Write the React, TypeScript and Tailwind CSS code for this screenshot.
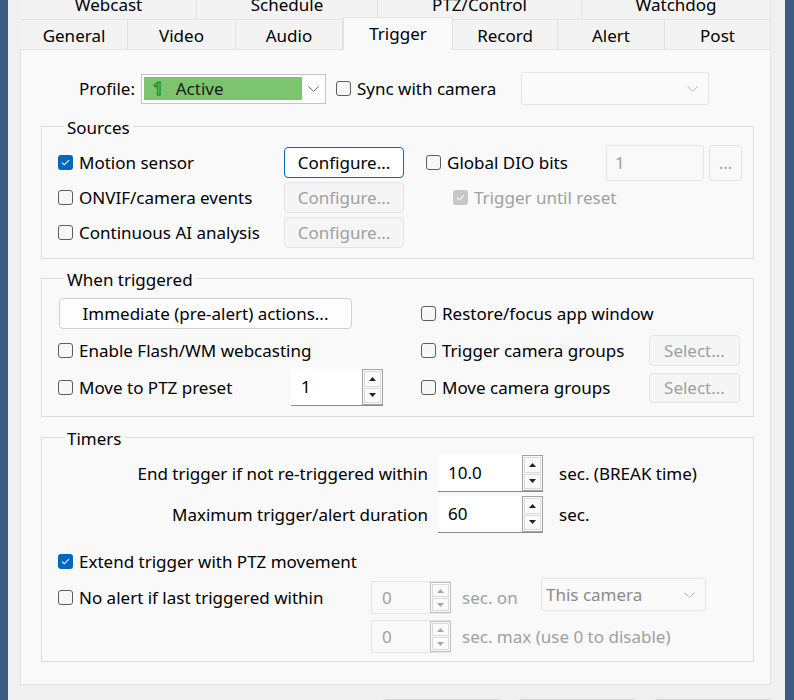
import React from "react";

type BoxProps = { checked?: boolean; disabled?: boolean };

const CheckBox: React.FC<BoxProps> = ({ checked = false, disabled = false }) => {
  if (checked) {
    return (
      <span
        className={`flex h-[15px] w-[15px] shrink-0 items-center justify-center rounded-[3px] ${
          disabled ? "bg-[#c6c6c6]" : "bg-[#0067c0]"
        }`}
      >
        <svg width="9" height="7" viewBox="0 0 9 7">
          <path d="M1 3.6 L3.3 5.8 L8 1.2" fill="none" stroke="#fff" strokeWidth="1.1" />
        </svg>
      </span>
    );
  }
  return <span className="h-[15px] w-[15px] shrink-0 rounded-[3px] border border-[#5d5d5d] bg-[#f7f7f7]" />;
};

const Check: React.FC<BoxProps & { label: string; className?: string }> = ({
  label,
  checked,
  disabled,
  className = "",
}) => (
  <label className={`flex shrink-0 items-center gap-[6px] ${className}`}>
    <CheckBox checked={checked} disabled={disabled} />
    <span className={`whitespace-nowrap ${disabled ? "text-[#a0a0a0]" : "text-black"}`}>{label}</span>
  </label>
);

const Chevron: React.FC<{ color?: string }> = ({ color = "#606060" }) => (
  <svg width="11" height="6" viewBox="0 0 11 6">
    <path d="M0.5 0.5 L5.5 5.3 L10.5 0.5" fill="none" stroke={color} strokeWidth="1" />
  </svg>
);

const Button: React.FC<{ label: string; disabled?: boolean; focused?: boolean; className?: string }> = ({
  label,
  disabled,
  focused,
  className = "",
}) => (
  <div
    className={`flex shrink-0 items-center justify-center whitespace-nowrap rounded-[4px] border ${
      focused
        ? "border-[#0067c0] bg-white text-black"
        : disabled
        ? "border-[#e3e3e3] bg-[#f5f5f5] text-[#a0a0a0]"
        : "border-[#d0d0d0] bg-[#fdfdfd] text-black"
    } ${className}`}
  >
    {label}
  </div>
);

const Arrow: React.FC<{ up?: boolean; color: string }> = ({ up, color }) => (
  <svg width="7" height="4" viewBox="0 0 7 4">
    <path d={up ? "M0 4 L3.5 0 L7 4 Z" : "M0 0 L3.5 4 L7 0 Z"} fill={color} />
  </svg>
);

const Spin: React.FC<{ value: string; disabled?: boolean; className?: string }> = ({
  value,
  disabled,
  className = "",
}) => (
  <div
    className={`flex shrink-0 ${
      disabled ? "border border-r-0 border-[#e5e5e5] bg-[#f9f9f9] text-[#a0a0a0]" : "border-b border-[#8a8a8a] bg-white text-black"
    } ${className}`}
  >
    <div className="flex flex-1 items-center pl-[10px]">{value}</div>
    <div
      className={`flex w-[21px] flex-col gap-[1px] border p-[1px] ${
        disabled ? "border-[#c2c2c2]" : "border-[#a3a3a3] bg-[#f9f9f9]"
      }`}
    >
      <div className="flex flex-1 items-center justify-center border border-[#dadada] bg-[#fafafa]">
        <Arrow up color={disabled ? "#a8a8a8" : "#222"} />
      </div>
      <div className="flex flex-1 items-center justify-center border border-[#dadada] bg-[#fafafa]">
        <Arrow color={disabled ? "#a8a8a8" : "#222"} />
      </div>
    </div>
  </div>
);

const Group: React.FC<{ title: string; className?: string; children: React.ReactNode }> = ({
  title,
  className = "",
  children,
}) => (
  <fieldset className={`shrink-0 border border-[#dcdcdc] ${className}`}>
    <legend className="ml-[6px] translate-y-[2px] px-[3px] leading-[22px]">{title}</legend>
    {children}
  </fieldset>
);

const topTabs = [
  { label: "Webcast", w: "w-[176px]" },
  { label: "Schedule", w: "w-[181px]" },
  { label: "PTZ/Control", w: "w-[204px]" },
  { label: "Watchdog", w: "w-[189px]" },
];

const tabs = [
  { label: "General", w: "w-[107px]" },
  { label: "Video", w: "w-[108px]" },
  { label: "Audio", w: "w-[107px]" },
  { label: "Trigger", w: "w-[110px]", active: true },
  { label: "Record", w: "w-[105px]" },
  { label: "Alert", w: "w-[107px]" },
  { label: "Post", w: "w-[106px]" },
];

export default function App() {
  return (
    <div className="flex h-[700px] w-[794px] overflow-hidden bg-[#f0f0f0] font-['Noto_Sans',sans-serif] text-[17px] text-black">
      <div className="w-[8px] shrink-0 bg-[#3d5a80]" />
      <div className="flex w-[777px] shrink-0 flex-col pl-[12px] pr-[14px]">
        {/* Tab rows */}
        <div className="mt-[-12px] flex h-[31px] shrink-0 pl-[1px]">
          {topTabs.map((t) => (
            <div
              key={t.label}
              className={`${t.w} flex items-center justify-center border-r border-[#e2e2e2] bg-[#f3f3f3] pt-[2px]`}
            >
              {t.label}
            </div>
          ))}
        </div>
        <div className="relative z-10 flex h-[30px] shrink-0 items-end pl-[1px]">
          {tabs.map((t) =>
            t.active ? (
              <div
                key={t.label}
                className={`${t.w} mb-[-1px] flex h-[33px] items-center justify-center border border-b-0 border-[#e2e2e2] bg-[#f9f9f9]`}
              >
                {t.label}
              </div>
            ) : (
              <div
                key={t.label}
                className={`${t.w} flex h-[30px] items-center justify-center border-r border-t border-[#e2e2e2] bg-[#f3f3f3] pt-[2px]`}
              >
                {t.label}
              </div>
            )
          )}
        </div>

        {/* Panel */}
        <div className="flex h-[636px] shrink-0 flex-col border border-[#e2e2e2] bg-[#f9f9f9] pl-[20px] pr-[16px]">
          {/* Profile row */}
          <div className="mt-[22px] flex h-[33px] shrink-0 items-center pl-[38px]">
            <span>Profile:</span>
            <div className="ml-[6px] flex h-[30px] w-[185px] items-center border border-[#c5c5c5] bg-white pl-[2px]">
              <div className="flex h-[23px] w-[158px] items-center bg-[#7cc46e] pl-[9px]">
                <span className="font-bold text-[#5fc95f] [-webkit-text-stroke:1px_#17801a]">1</span>
                <span className="ml-[13px] text-[#1a1a1a]">Active</span>
              </div>
              <div className="flex flex-1 items-center justify-center">
                <Chevron />
              </div>
            </div>
            <Check label="Sync with camera" className="ml-[10px]" />
            <div className="ml-[25px] flex h-[33px] w-[188px] items-center justify-end rounded-[3px] border border-[#e5e5e5] bg-[#fafafa] pr-[10px]">
              <Chevron color="#b5b5b5" />
            </div>
          </div>

          {/* Sources */}
          <Group title="Sources" className="mt-[10px] pb-[10px] pl-[16px]">
            <div className="mt-[10px] flex flex-col gap-[4px]">
              <div className="flex h-[31px] items-center">
                <Check label="Motion sensor" checked className="w-[226px]" />
                <Button label="Configure..." focused className="h-[31px] w-[120px]" />
                <Check label="Global DIO bits" className="ml-[22px] w-[180px]" />
                <div className="flex h-[36px] w-[98px] items-center rounded-[3px] border border-[#e5e5e5] bg-[#f9f9f9] pl-[8px] text-[#a0a0a0]">
                  1
                </div>
                <Button label="..." disabled className="ml-[5px] h-[36px] w-[33px] bg-[#f9f9f9] text-[#606060]" />
              </div>
              <div className="flex h-[31px] items-center">
                <Check label="ONVIF/camera events" className="w-[226px]" />
                <Button label="Configure..." disabled className="h-[31px] w-[120px]" />
                <Check label="Trigger until reset" checked disabled className="ml-[49px]" />
              </div>
              <div className="flex h-[31px] items-center">
                <Check label="Continuous AI analysis" className="w-[226px]" />
                <Button label="Configure..." disabled className="h-[31px] w-[120px]" />
              </div>
            </div>
          </Group>

          {/* When triggered */}
          <Group title="When triggered" className="mt-[8px] pb-[13px] pl-[16px]">
            <div className="mt-[9px] flex flex-col gap-[6px]">
              <div className="flex h-[31px] items-center">
                <Button label="Immediate (pre-alert) actions..." className="ml-[1px] h-[31px] w-[293px]" />
                <Check label="Restore/focus app window" className="ml-[69px]" />
              </div>
              <div className="flex h-[31px] items-center">
                <Check label="Enable Flash/WM webcasting" className="w-[363px]" />
                <Check label="Trigger camera groups" className="w-[228px]" />
                <Button label="Select..." disabled className="h-[31px] w-[91px]" />
              </div>
              <div className="flex h-[31px] items-center">
                <Check label="Move to PTZ preset" className="w-[233px]" />
                <Spin value="1" className="h-[37px] w-[92px]" />
                <Check label="Move camera groups" className="ml-[38px] w-[228px]" />
                <Button label="Select..." disabled className="h-[30px] w-[91px]" />
              </div>
            </div>
          </Group>

          {/* Timers */}
          <Group title="Timers" className="mt-[9px] pb-[8px] pl-[16px]">
            <div className="mt-[7px] flex flex-col">
              <div className="flex h-[37px] items-center">
                <span className="w-[370px] whitespace-nowrap text-right">End trigger if not re-triggered within</span>
                <Spin value="10.0" className="ml-[10px] h-[37px] w-[105px]" />
                <span className="ml-[16px]">sec. (BREAK time)</span>
              </div>
              <div className="mt-[4px] flex h-[37px] items-center">
                <span className="w-[370px] text-right">Maximum trigger/alert duration</span>
                <Spin value="60" className="ml-[10px] h-[37px] w-[105px]" />
                <span className="ml-[16px]">sec.</span>
              </div>
              <div className="mt-[13px] flex h-[31px] items-center">
                <Check label="Extend trigger with PTZ movement" checked />
              </div>
              <div className="mt-[4px] flex h-[33px] items-center">
                <Check label="No alert if last triggered within" className="w-[313px]" />
                <Spin value="0" disabled className="h-[33px] w-[80px]" />
                <span className="ml-[11px] w-[79px] text-[#a0a0a0]">sec. on</span>
                <div className="mt-[-6px] flex h-[33px] w-[165px] items-center justify-between rounded-[3px] border border-[#e5e5e5] bg-[#fafafa] pl-[4px] pr-[10px] text-[#8a8a8a]">
                  <span>This camera</span>
                  <Chevron color="#b5b5b5" />
                </div>
              </div>
              <div className="mt-[6px] flex h-[33px] items-center pl-[313px]">
                <Spin value="0" disabled className="h-[33px] w-[80px]" />
                <span className="ml-[11px] text-[#a0a0a0]">sec. max (use 0 to disable)</span>
              </div>
            </div>
          </Group>
        </div>

        {/* Dialog buttons */}
        <div className="mt-[14px] flex shrink-0 pl-[362px]">
          <Button label="OK" className="h-[28px] w-[120px]" />
          <Button label="Cancel" className="ml-[15px] h-[28px] w-[120px]" />
          <Button label="Apply" className="ml-[16px] h-[28px] w-[120px]" />
        </div>
      </div>
      <div className="w-[9px] shrink-0 bg-[#3d5a80]" />
    </div>
  );
}
